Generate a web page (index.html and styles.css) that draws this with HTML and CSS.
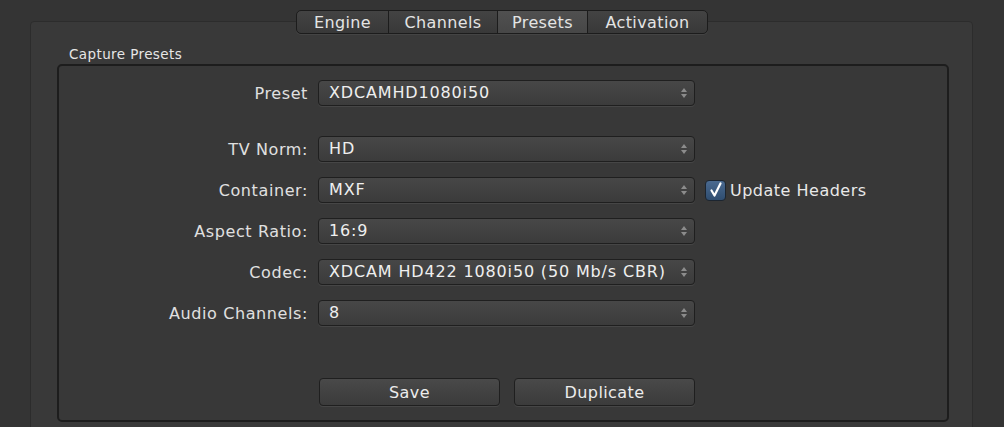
FILE: index.html
```html
<!DOCTYPE html>
<html>
<head>
<meta charset="utf-8">
<link rel="stylesheet" href="styles.css">
</head>
<body>
<div class="page">
  <div class="tabbar">
    <div class="tabs">
      <div class="tab t-engine">Engine</div>
      <div class="tab t-channels">Channels</div>
      <div class="tab t-presets active">Presets</div>
      <div class="tab t-activation">Activation</div>
    </div>
  </div>
  <div class="panel">
    <div class="group-title">Capture Presets</div>
    <div class="group">
      <div class="form">
        <div class="label">Preset</div>
        <div class="select">XDCAMHD1080i50<span class="arrows"><i class="up"></i><i class="down"></i></span></div>
        <div class="extra"></div>

        <div class="label first">TV Norm:</div>
        <div class="select first">HD<span class="arrows"><i class="up"></i><i class="down"></i></span></div>
        <div class="extra first"></div>

        <div class="label">Container:</div>
        <div class="select">MXF<span class="arrows"><i class="up"></i><i class="down"></i></span></div>
        <div class="extra"><span class="check"><svg width="14" height="16" viewBox="0 0 14 16"><path d="M2.5 8.5 L5.5 13.5 L11.5 1.5" fill="none" stroke="#fff" stroke-width="2.2" stroke-linecap="round" stroke-linejoin="round"/></svg></span><span class="check-label">Update Headers</span></div>

        <div class="label">Aspect Ratio:</div>
        <div class="select">16:9<span class="arrows"><i class="up"></i><i class="down"></i></span></div>
        <div class="extra"></div>

        <div class="label">Codec:</div>
        <div class="select">XDCAM HD422 1080i50 (50 Mb/s CBR)<span class="arrows"><i class="up"></i><i class="down"></i></span></div>
        <div class="extra"></div>

        <div class="label">Audio Channels:</div>
        <div class="select">8<span class="arrows"><i class="up"></i><i class="down"></i></span></div>
        <div class="extra"></div>
      </div>
      <div class="buttons">
        <div class="btn">Save</div>
        <div class="btn">Duplicate</div>
      </div>
    </div>
  </div>
</div>
</body>
</html>
```
FILE: styles.css
```css
html, body {
  margin: 0;
  padding: 0;
  background: #343434;
  font-family: "DejaVu Sans", "Liberation Sans", sans-serif;
  color: #e2e2e2;
  overflow: hidden;
}
.page {
  width: 1004px;
  height: 427px;
  padding-top: 10px;
  box-sizing: border-box;
}
.tabbar {
  display: flex;
  justify-content: center;
  position: relative;
  z-index: 2;
  height: 24px;
}
.tabs {
  display: flex;
  height: 24px;
  border: 1px solid #1c1c1c;
  border-radius: 5px;
  overflow: hidden;
  background: linear-gradient(#434343, #383838);
  box-shadow: 0 1px 0 rgba(255,255,255,0.06);
  box-sizing: border-box;
}
.tab {
  display: flex;
  align-items: center;
  justify-content: center;
  font-size: 16px;
  letter-spacing: 0.4px;
  color: #e4e4e4;
  border-left: 1px solid #1c1c1c;
  box-sizing: border-box;
}
.tab:first-child { border-left: none; }
.t-engine { width: 91px; }
.t-channels { width: 109px; }
.t-presets { width: 90px; }
.t-activation { width: 120px; }
.tab.active {
  background: linear-gradient(#505050, #474747);
}
.panel {
  margin: -13px 0 0 30px;
  width: 943px;
  height: 420px;
  background: #393939;
  border: 1px solid #2c2c2c;
  border-radius: 4px;
  box-sizing: border-box;
  padding: 24px 23px 0 26px;
}
.group-title {
  font-size: 13.5px;
  letter-spacing: 0.4px;
  color: #e6e6e6;
  padding-left: 12px;
  height: 16px;
  line-height: 16px;
  margin-bottom: 2px;
}
.group {
  height: 358px;
  border: 2px solid #1d1d1d;
  border-radius: 5px;
  box-sizing: border-box;
  background: #383838;
  padding-top: 14px;
}
.form {
  display: grid;
  grid-template-columns: 249px 377px 1fr;
  column-gap: 10px;
  row-gap: 15px;
  align-items: center;
}
.first { margin-top: 15px; }
.label {
  text-align: right;
  font-size: 16px;
  letter-spacing: 0.6px;
  color: #e0e0e0;
}
.select {
  position: relative;
  height: 26px;
  line-height: 24px;
  box-sizing: border-box;
  border: 1px solid #1f1f1f;
  border-radius: 4px;
  background: linear-gradient(#474747, #3b3b3b);
  box-shadow: 0 1px 0 rgba(255,255,255,0.07);
  padding-left: 10px;
  font-size: 16px;
  letter-spacing: 0.85px;
  color: #efefef;
}
.arrows {
  position: absolute;
  right: 7px;
  top: 7px;
  display: flex;
  flex-direction: column;
  gap: 2px;
}
.arrows i {
  display: block;
  width: 0;
  height: 0;
  border-left: 3px solid transparent;
  border-right: 3px solid transparent;
}
.arrows .up { border-bottom: 4px solid #8c8c8c; }
.arrows .down { border-top: 4px solid #8c8c8c; }
.extra {
  display: flex;
  align-items: center;
  height: 26px;
}
.check {
  width: 21px;
  height: 21px;
  box-sizing: border-box;
  border: 1px solid #1c2530;
  border-radius: 4px;
  background: linear-gradient(#4a6a90, #2f4d70);
  display: flex;
  align-items: center;
  justify-content: center;
  margin-right: 4px;
}
.check-label {
  font-size: 16px;
  letter-spacing: 0.5px;
  color: #e8e8e8;
}
.buttons {
  display: flex;
  gap: 14px;
  margin: 52px 0 0 260px;
}
.btn {
  width: 181px;
  height: 28px;
  box-sizing: border-box;
  border: 1px solid #1f1f1f;
  border-radius: 4px;
  background: linear-gradient(#494949, #3b3b3b);
  box-shadow: 0 1px 0 rgba(255,255,255,0.07);
  display: flex;
  align-items: center;
  justify-content: center;
  font-size: 16px;
  letter-spacing: 0.4px;
  color: #ececec;
}
```
